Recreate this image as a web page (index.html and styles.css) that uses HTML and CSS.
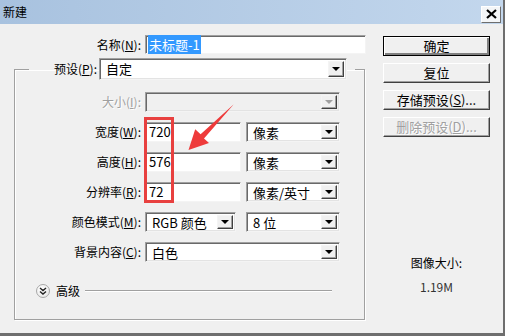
FILE: index.html
```html
<!DOCTYPE html>
<html lang="zh-CN">
<head>
    <meta charset="UTF-8">
    <title>新建</title>
    <link rel="stylesheet" href="styles.css">
</head>
<body>
    <div class="dialog">
        <div class="titlebar">
            <span class="title">新建</span>
            <div class="close">
                <svg width="11" height="10" viewBox="0 0 11 10"><path d="M1 1 L10 9 M10 1 L1 9" stroke="#000" stroke-width="2.2"/></svg>
            </div>
        </div>
        <div class="content">
            <div class="main">
                <div class="name-row">
                    <span class="label name-label">名称(<u>N</u>):</span>
                    <div class="textbox name-box"><span class="selected">未标题-1</span></div>
                </div>
                <fieldset class="group">
                    <legend>
                        <div class="preset">
                            <span class="label preset-label">预设(<u>P</u>):</span>
                            <div class="combo preset-combo"><span class="value">自定</span><span class="drop"></span></div>
                        </div>
                    </legend>
                    <div class="rows">
                        <div class="row">
                            <span class="label disabled">大小(<u>I</u>):</span>
                            <div class="combo off w-full"><span class="value"></span><span class="drop"></span></div>
                        </div>
                        <div class="row">
                            <span class="label">宽度(<u>W</u>):</span>
                            <div class="textbox w-num">720</div>
                            <div class="combo w-unit"><span class="value">像素</span><span class="drop"></span></div>
                        </div>
                        <div class="row">
                            <span class="label">高度(<u>H</u>):</span>
                            <div class="textbox w-num">576</div>
                            <div class="combo w-unit"><span class="value">像素</span><span class="drop"></span></div>
                        </div>
                        <div class="row">
                            <span class="label">分辨率(<u>R</u>):</span>
                            <div class="textbox w-num">72</div>
                            <div class="combo w-unit"><span class="value">像素/英寸</span><span class="drop"></span></div>
                        </div>
                        <div class="row">
                            <span class="label">颜色模式(<u>M</u>):</span>
                            <div class="combo w-mode"><span class="value">RGB 颜色</span><span class="drop"></span></div>
                            <div class="combo w-unit"><span class="value">8 位</span><span class="drop"></span></div>
                        </div>
                        <div class="row">
                            <span class="label">背景内容(<u>C</u>):</span>
                            <div class="combo w-full"><span class="value">白色</span><span class="drop"></span></div>
                        </div>
                    </div>
                    <div class="advanced">
                        <span class="toggle">
                            <svg width="8" height="8" viewBox="0 0 8 8"><path d="M1 1 L4 3.5 L7 1 M1 4.5 L4 7 L7 4.5" fill="none" stroke="#222" stroke-width="1.4"/></svg>
                        </span>
                        <span class="adv-text">高级</span>
                        <span class="adv-line"></span>
                    </div>
                </fieldset>
            </div>
            <div class="side">
                <div class="buttons">
                    <div class="btn default">确定</div>
                    <div class="btn">复位</div>
                    <div class="btn">存储预设(<u>S</u>)...</div>
                    <div class="btn disabled">删除预设(<u>D</u>)...</div>
                </div>
                <div class="image-size">
                    <div>图像大小:</div>
                    <div class="size-value">1.19M</div>
                </div>
            </div>
        </div>

        <!-- annotation drawn over the dialog -->
        <div class="mark"></div>
        <svg class="arrow" width="60" height="60" viewBox="180 100 60 60">
            <polygon points="233.6,104.6 232.4,105.4 200.6,134.2 195.2,129.3 188.5,150 209,143 204,138.5" fill="#ee3b3b"/>
        </svg>
    </div>
</body>
</html>
```

FILE: styles.css
```css
* {
    box-sizing: border-box;
}
body {
    margin: 0;
    background-color: #f0f0f0;
    font-family: 'Noto Sans CJK SC', 'Liberation Sans', sans-serif;
    font-size: 12px;
    color: #000;
}
u {
    text-decoration: underline;
}
.dialog {
    position: relative;
    width: 505px;
    height: 336px;
    background-color: #f0f0f0;
    border-right: 2px solid #6e6e6e;
    border-bottom: 3px solid #6e6e6e;
    overflow: hidden;
}
.titlebar {
    display: flex;
    align-items: center;
    height: 24px;
    padding-left: 3px;
    background: linear-gradient(to right, #a8c2df, #c3d7ed);
}
.title {
    line-height: 16px;
}
.close {
    display: flex;
    align-items: center;
    justify-content: center;
    margin-left: auto;
    margin-right: 2px;
    margin-top: 4px;
    width: 20px;
    height: 17px;
    background-color: #f4f6f8;
    border: 1px solid;
    border-color: #fff #6e6e6e #6e6e6e #fff;
}
.content {
    display: flex;
}
.main {
    width: 383px;
}
.label {
    text-align: right;
    line-height: 16px;
    white-space: nowrap;
}
.label.disabled {
    color: #a0a0a0;
    text-shadow: 1px 1px 0 #fff;
}
.name-row {
    display: flex;
    align-items: center;
    margin-top: 11px;
    height: 19px;
}
.name-label {
    width: 141px;
    margin-right: 4px;
}
.textbox {
    height: 100%;
    background-color: #fff;
    border: 1px solid;
    border-color: #a0a0a0 #f4f4f4 #f4f4f4 #a0a0a0;
    box-shadow: inset 1px 1px 0 #696969;
    padding: 1px 0 0 3px;
    line-height: 16px;
    font-size: 13px;
}
.name-box {
    width: 221px;
    padding-left: 2px;
}
.selected {
    background-color: #3399ff;
    color: #fff;
    padding: 0 1px;
}
.group {
    margin: 4px 0 0 14px;
    padding: 0;
    width: 351px;
    height: 262px;
    min-width: 0;
    border: 1px solid #a0a0a0;
    box-shadow: 1px 1px 0 #fff, inset 1px 1px 0 #fff;
}
.group legend {
    margin-left: 14px;
    padding: 0;
}
.preset {
    display: flex;
    align-items: center;
    width: 326px;
    height: 22px;
}
.preset-label {
    width: 68px;
}
.preset-combo {
    margin-left: 2px;
    width: 248px;
}
.combo {
    display: flex;
    height: 100%;
    background-color: #fff;
    border: 1px solid;
    border-color: #a0a0a0 #f4f4f4 #f4f4f4 #a0a0a0;
    box-shadow: inset 1px 1px 0 #696969, inset -1px -1px 0 #e3e3e3;
    padding: 2px;
}
.combo.off {
    background-color: #f0f0f0;
}
.combo .value {
    flex: 1;
    padding-left: 4px;
    line-height: 16px;
    font-size: 13px;
}
.drop {
    position: relative;
    width: 16px;
    background-color: #f0f0f0;
    border: 1px solid;
    border-color: #f4f4f4 #404040 #404040 #f4f4f4;
    box-shadow: inset -1px -1px 0 #a0a0a0;
}
.drop::after {
    content: '';
    position: absolute;
    left: 3px;
    top: 50%;
    margin-top: -2px;
    border-left: 4px solid transparent;
    border-right: 4px solid transparent;
    border-top: 4px solid #000;
}
.combo.off .drop::after {
    border-top-color: #a0a0a0;
}
.rows {
    display: flex;
    flex-direction: column;
    gap: 10px;
    margin-top: 12px;
}
.row {
    display: flex;
    align-items: center;
    height: 20px;
}
.row .label {
    width: 126px;
    margin-right: 4px;
}
.w-full {
    width: 195px;
}
.w-num {
    width: 96px;
    margin-right: 5px;
}
.w-unit {
    width: 94px;
}
.w-mode {
    width: 91px;
    margin-right: 10px;
}
.advanced {
    display: flex;
    align-items: center;
    height: 14px;
    margin-top: 22px;
    padding-left: 21px;
}
.toggle {
    display: flex;
    align-items: center;
    justify-content: center;
    width: 14px;
    height: 14px;
    border-radius: 50%;
    border: 1px solid #a8a8a8;
    background: radial-gradient(circle at 40% 35%, #ffffff, #e4e4e4);
}
.adv-text {
    margin-left: 6px;
    line-height: 16px;
}
.adv-line {
    margin-left: 5px;
    width: 247px;
    height: 2px;
    border-top: 1px solid #a0a0a0;
    border-bottom: 1px solid #fff;
}
.side {
    width: 107px;
}
.buttons {
    display: flex;
    flex-direction: column;
    gap: 7px;
    margin-top: 12px;
}
.btn {
    height: 20px;
    line-height: 17px;
    text-align: center;
    background-color: #f0f0f0;
    border: 1px solid;
    border-color: #fff #404040 #404040 #fff;
    box-shadow: inset -1px -1px 0 #a0a0a0;
    font-size: 13px;
}
.btn.default {
    border: 1px solid #000;
    box-shadow: inset 1px 1px 0 #fff, inset -2px -2px 0 #808080;
}
.btn.disabled {
    color: #a0a0a0;
    text-shadow: 1px 1px 0 #fff;
}
.image-size {
    margin-top: 118px;
    text-align: center;
    line-height: 16px;
}
.size-value {
    margin-top: 8px;
    color: #333;
}
.mark {
    position: absolute;
    left: 144px;
    top: 117px;
    width: 30px;
    height: 86px;
    border: 3px solid #e8403f;
}
.arrow {
    position: absolute;
    left: 180px;
    top: 100px;
}
```
